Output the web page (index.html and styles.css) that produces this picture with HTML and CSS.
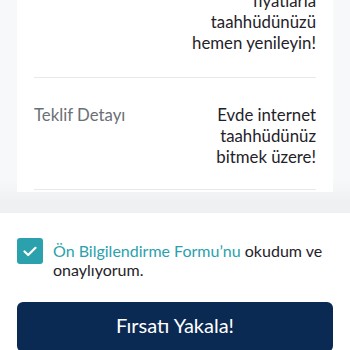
FILE: index.html
```html
<!DOCTYPE html>
<html lang="tr">
<head>
<meta charset="utf-8">
<link rel="stylesheet" href="styles.css">
</head>
<body>
<div class="top">
  <div class="card">
    <div class="row first">
      <div class="label"></div>
      <div class="value">fiyatlarla<br>taahhüdünüzü<br>hemen yenileyin!</div>
    </div>
    <div class="row second">
      <div class="label">Teklif Detayı</div>
      <div class="value">Evde internet<br>taahhüdünüz<br>bitmek üzere!</div>
    </div>
  </div>
</div>
<div class="footer">
  <div class="consent">
    <span class="check">
      <svg width="14" height="11" viewBox="0 0 14 11"><path d="M1.5 5.5 L5.2 9 L12.5 1.8" fill="none" stroke="#fff" stroke-width="2.2" stroke-linecap="round" stroke-linejoin="round"/></svg>
    </span>
    <p class="consent-text"><span class="link">Ön Bilgilendirme Formu’nu</span> okudum ve onaylıyorum.</p>
  </div>
  <button class="cta">Fırsatı Yakala!</button>
</div>
</body>
</html>
```
FILE: styles.css
```css
html, body {
  margin: 0;
  padding: 0;
}
body {
  width: 350px;
  height: 350px;
  overflow: hidden;
  background: #ffffff;
  font-family: Lato, "Noto Sans", sans-serif;
}
.top {
  background: linear-gradient(#f7f8fa 0, #f7f8fa 190px, #eef0f2 213px);
  padding: 0 17px 21px;
}
.card {
  background: #ffffff;
  padding: 0 17px 2px;
  margin-top: -10px;
}
.row {
  display: flex;
  justify-content: space-between;
  border-bottom: 1px solid #e7e9ec;
}
.row.first {
  padding-bottom: 24px;
}
.row.second {
  padding: 26px 0 22px;
}
.label {
  font-size: 16.8px;
  line-height: 21px;
  color: #6b6f76;
}
.value {
  font-size: 16.8px;
  line-height: 21px;
  color: #1f2229;
  text-align: right;
}
.footer {
  background: #ffffff;
  padding: 25px 17px 0 17px;
}
.consent {
  display: flex;
  align-items: flex-start;
  gap: 10px;
}
.check {
  flex: none;
  width: 26px;
  height: 26px;
  border-radius: 3px;
  background: #2ba1ad;
  display: flex;
  align-items: center;
  justify-content: center;
}
.consent-text {
  margin: 3px 0 0;
  font-size: 16px;
  line-height: 19px;
  color: #1f2229;
}
.link {
  color: #2ba1ad;
}
.cta {
  display: block;
  width: 100%;
  margin-top: 23px;
  height: 50px;
  border: 0;
  border-radius: 6px;
  background: #0b2a53;
  color: #ffffff;
  font-family: Lato, "Noto Sans", sans-serif;
  font-size: 20px;
  padding: 0 0 4px;
}
```
